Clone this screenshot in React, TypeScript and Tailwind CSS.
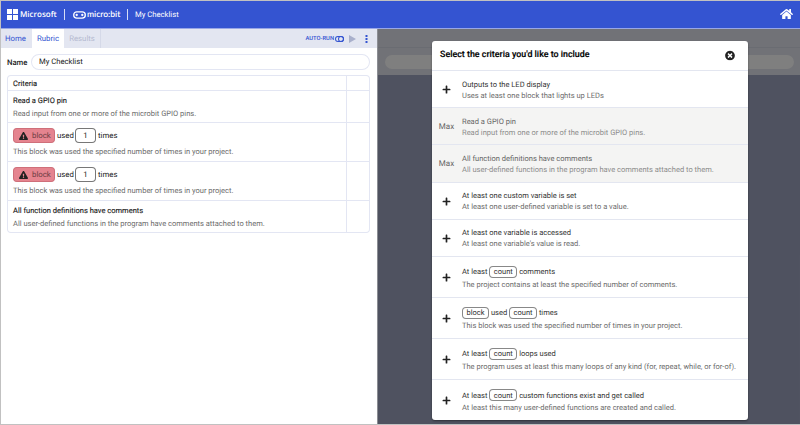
import React from "react";
import { FaHome, FaPlus, FaTimesCircle, FaExclamationTriangle } from "react-icons/fa";

const Pill = ({ children }: { children: React.ReactNode }) => (
  <span className="inline-flex h-[12px] items-center rounded-[4px] border border-[#888] px-[3.5px] leading-none">
    {children}
  </span>
);

type Criterion = { title: React.ReactNode; desc: string; max?: boolean; height: string };

const criteria: Criterion[] = [
  { title: "Outputs to the LED display", desc: "Uses at least one block that lights up LEDs", height: "h-[37px]" },
  { title: "Read a GPIO pin", desc: "Read input from one or more of the microbit GPIO pins.", max: true, height: "h-[37px]" },
  { title: "All function definitions have comments", desc: "All user-defined functions in the program have comments attached to them.", max: true, height: "h-[37.5px]" },
  { title: "At least one custom variable is set", desc: "At least one user-defined variable is set to a value.", height: "h-[37px]" },
  { title: "At least one variable is accessed", desc: "At least one variable's value is read.", height: "h-[37px]" },
  { title: <>At least <Pill>count</Pill> comments</>, desc: "The project contains at least the specified number of comments.", height: "h-[41px]" },
  { title: <><Pill>block</Pill> used <Pill>count</Pill> times</>, desc: "This block was used the specified number of times in your project.", height: "h-[41px]" },
  { title: <>At least <Pill>count</Pill> loops used</>, desc: "The program uses at least this many loops of any kind (for, repeat, while, or for-of).", height: "h-[41px]" },
  { title: <>At least <Pill>count</Pill> custom functions exist and get called</>, desc: "At least this many user-defined functions are created and called.", height: "h-[41px]" },
];

const BlockTitle = () => (
  <div className="flex h-[15px] items-center text-[7.8px]">
    <span className="flex h-[15px] w-[42px] items-center rounded-[4px] border border-[#cf6f7a] bg-[#e5848f] pl-[5px] text-[#6b3b42]">
      <FaExclamationTriangle className="mr-[4px] h-[8px] w-[9px] text-[#222]" />
      block
    </span>
    <span className="ml-[2px] w-[18px]">used</span>
    <span className="flex h-[15px] w-[21px] items-center justify-center rounded-[4px] border border-[#777]">1</span>
    <span className="ml-[2px]">times</span>
  </div>
);

const TableRow = ({ children, className }: { children: React.ReactNode; className: string }) => (
  <div className={"flex border-[#e3e6f3] text-[8px] leading-[10px] text-[#222] " + className}>
    <div className="w-[339px] shrink-0 border-r border-[#e3e6f3] pl-[5px]">{children}</div>
  </div>
);

const Desc = ({ children, className }: { children: React.ReactNode; className: string }) => (
  <div className={"whitespace-nowrap text-[7.53px] text-[#6c6c6c] " + className}>{children}</div>
);

const Title = ({ children }: { children: React.ReactNode }) => (
  <div className="pt-[4.5px] text-[7.52px] text-[#222] [-webkit-text-stroke:0.12px_#222]">{children}</div>
);

const Logo = () => (
  <span className="grid h-[11px] w-[11px] grid-cols-2 gap-px">
    <i className="bg-white" />
    <i className="bg-white" />
    <i className="bg-white" />
    <i className="bg-white" />
  </span>
);

export default function App() {
  return (
    <div className="flex h-[425px] w-[800px] rotate-[0.001deg] flex-col overflow-hidden border-b border-l border-t border-[#c1c1c1] bg-white font-['Roboto',sans-serif] text-[7.7px] [text-rendering:geometricPrecision]">
      <header className="flex h-[28px] shrink-0 items-center border-b border-[#98a7e6] bg-[#3454d1] pl-[6px] text-white">
        <Logo />
        <span className="ml-[2px] w-[37px] whitespace-nowrap font-['Open_Sans',sans-serif] text-[8px] font-semibold">Microsoft</span>
        <span className="ml-[7px] h-[11px] w-px bg-white/80" />
        <svg className="ml-[8px] h-[8px] w-[13px]" viewBox="0 0 13 8" fill="none" stroke="white" strokeWidth="1.3">
          <rect x="0.7" y="0.9" width="11.6" height="6.2" rx="3.1" />
          <circle cx="3.7" cy="4" r="0.5" />
          <circle cx="9.3" cy="4" r="0.5" />
        </svg>
        <span className="ml-px w-[35px] whitespace-nowrap font-['Lato',sans-serif] text-[8.5px] font-semibold">micro:bit</span>
        <span className="ml-[5px] h-[11px] w-px bg-white/80" />
        <span className="ml-[7px]">My Checklist</span>
        <FaHome className="ml-auto mr-[7px] h-[12px] w-[13px] -translate-y-px" />
      </header>
      <div className="flex min-h-0 flex-1">
        <main className="w-[376px] shrink-0">
          <nav className="flex h-[19px] items-center bg-[#e3e6f1] text-[7.8px] text-[#3454d1]">
            <span className="w-[31px] pl-[4px]">Home</span>
            <span className="flex h-full w-[32px] items-center justify-center bg-white">Rubric</span>
            <span className="flex h-full w-[37px] items-center justify-center border-r border-[#d5d9e8] text-[#b5bad0]">Results</span>
            <span className="ml-auto pt-[1px] text-[5.8px] font-medium">AUTO-RUN</span>
            <svg className="ml-[1px] h-[6px] w-[9px]" viewBox="0 0 9 6" fill="none" stroke="#3454d1">
              <rect x="0.5" y="0.5" width="8" height="5" rx="2.5" />
              <circle cx="6" cy="3" r="2.5" />
            </svg>
            <svg className="ml-[5px] h-[8px] w-[7px]" viewBox="0 0 7 8" fill="#a9b0cc">
              <path d="M0 0L7 4L0 8Z" />
            </svg>
            <svg className="ml-[9px] mr-[9px] h-[8px] w-[3px]" viewBox="0 0 3 8" fill="#3454d1">
              <path d="M.5 0h2v2h-2zM.5 3h2v2h-2zM.5 6h2v2h-2z" />
            </svg>
          </nav>
          <div className="mt-[6px] flex h-[16px] items-center pl-[6px] text-[#222]">
            <span className="w-[24px] pt-[1px] text-[7.7px] font-medium">Name</span>
            <div className="flex h-[16px] w-[339px] items-center rounded-full border border-[#e3e6f3] pl-[7px] text-[7.7px]">My Checklist</div>
          </div>
          <section className="ml-[6px] mt-[5px] h-[158px] w-[363px] overflow-hidden rounded-[4px] border border-[#e3e6f3]">
            <TableRow className="h-[15px] border-b">
              <div className="pt-[3px] text-[7.5px] [-webkit-text-stroke:0.12px_#222]">Criteria</div>
            </TableRow>
            <TableRow className="h-[32px] border-b">
              <Title>Read a GPIO pin</Title>
              <Desc className="mt-[3px]">Read input from one or more of the microbit GPIO pins.</Desc>
            </TableRow>
            <TableRow className="h-[39px] border-b">
              <div className="pt-[5px]"><BlockTitle /></div>
              <Desc className="mt-[4px]">This block was used the specified number of times in your project.</Desc>
            </TableRow>
            <TableRow className="h-[39px] border-b">
              <div className="pt-[5px]"><BlockTitle /></div>
              <Desc className="mt-[4px]">This block was used the specified number of times in your project.</Desc>
            </TableRow>
            <TableRow className="h-[32px]">
              <Title>All function definitions have comments</Title>
              <Desc className="mt-[3px]">All user-defined functions in the program have comments attached to them.</Desc>
            </TableRow>
          </section>
        </main>
        <aside className="relative flex-1 border-l border-[#8c8e94] bg-[#4f5260]">
          <div className="h-[19px] border-b border-[#6a6c72] bg-[#717277]" />
          <div className="flex h-[27px] items-center justify-center bg-[#717277]">
            <div className="h-[14px] w-[409px] rounded-full bg-[#7f7f7f]" />
          </div>
          <div
            role="dialog"
            className="absolute left-[54px] top-[12px] h-[379px] w-[316px] overflow-hidden rounded-[3px] bg-white shadow-[0_1px_2px_rgba(0,0,0,0.4)]"
          >
            <div className="flex h-[30px] items-center justify-between border-b border-[#e3e6f0] pl-[8px] pr-[13px]">
              <h1 className="whitespace-nowrap pt-[1px] text-[8.9px] font-medium text-black [-webkit-text-stroke:0.15px_black]">Select the criteria you'd like to include</h1>
              <FaTimesCircle className="h-[10px] w-[10px] -translate-y-[0.5px] text-[#222]" />
            </div>
            {criteria.map((c, i) => (
              <div
                key={i}
                className={
                  "flex items-center border-b border-[#e3e6f0] last:border-b-0 " + c.height + (c.max ? " bg-[#f4f4f3]" : "")
                }
              >
                <div className="flex w-[30px] items-center justify-center pr-[1px] pt-[1px] text-[8px] text-[#666]">
                  {c.max ? "Max" : <FaPlus className="h-[9px] w-[9px] text-[#222]" />}
                </div>
                <div className={"whitespace-nowrap text-[7.53px] " + (c.height === "h-[41px]" ? "pt-[1px] " : "pt-[2px] ") + (c.max ? "text-[#666]" : "text-[#333]")}>
                  <div className={c.height === "h-[41px]" ? "h-[14px] pt-[0.5px] leading-[14px]" : "h-[10px] leading-[10px]"}>{c.title}</div>
                  <div className={"h-[11px] leading-[11px] " + (c.max ? "text-[#8c8c8c]" : "text-[#6c6c6c]")}>{c.desc}</div>
                </div>
              </div>
            ))}
          </div>
        </aside>
      </div>
    </div>
  );
}
